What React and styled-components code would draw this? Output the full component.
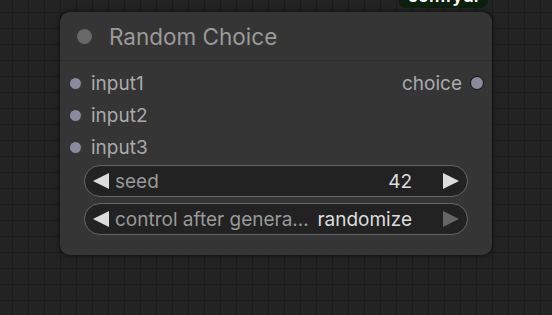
import React from "react";
import styled, { createGlobalStyle } from "styled-components";

const Global = createGlobalStyle`
  html, body {
    margin: 0;
    padding: 0;
    width: 552px;
    height: 315px;
    overflow: hidden;
    background: #222;
  }
  body {
    font-family: Inter, "Noto Sans", sans-serif;
  }
`;

const Canvas = styled.div`
  position: relative;
  width: 552px;
  height: 315px;
  overflow: hidden;
  background-color: #232323;
  background-image:
    linear-gradient(to right, #1b1b1b 1.5px, transparent 1.5px),
    linear-gradient(to bottom, #1b1b1b 1.5px, transparent 1.5px);
  background-size: 16px 16px;
  background-position: 12px 12px;
`;

const Badge = styled.div`
  position: absolute;
  left: 398px;
  top: -18px;
  width: 90px;
  height: 26px;
  border-radius: 8px;
  background: #0d1f0d;
  color: #fff;
  font-size: 18px;
  font-weight: 600;
  display: flex;
  align-items: center;
  justify-content: center;
`;

const Node = styled.div`
  position: absolute;
  left: 60px;
  top: 12px;
  width: 432px;
  height: 243px;
  box-sizing: border-box;
  background: #353535;
  border-radius: 10px;
  box-shadow: 0 0 4px 1px rgba(0, 0, 0, 0.45);
  display: flex;
  flex-direction: column;
`;

const Title = styled.div`
  height: 49px;
  box-sizing: border-box;
  border-bottom: 1px solid #2b2b2b;
  display: flex;
  align-items: center;
  padding-left: 17px;
  gap: 17px;
  color: #9a9a9a;
  font-size: 22.5px;
`;

const TitleDot = styled.span`
  width: 15px;
  height: 15px;
  border-radius: 50%;
  background: #686868;
`;

const Body = styled.div`
  padding-top: 6px;
  display: flex;
  flex-direction: column;
`;

const Row = styled.div`
  height: 32px;
  display: flex;
  align-items: center;
  justify-content: space-between;
  padding: 0 8px 0 10px;
  color: #aaa;
  font-size: 19px;
`;

const Slot = styled.div`
  display: flex;
  align-items: center;
  gap: ${(p) => (p.out ? "8px" : "10px")};
`;

const Dot = styled.span`
  width: ${(p) => (p.out ? "12px" : "11px")};
  height: ${(p) => (p.out ? "12px" : "11px")};
  border-radius: 50%;
  background: #8a8a9e;
  border: ${(p) => (p.out ? "1.5px solid #111" : "none")};
`;

const Widgets = styled.div`
  padding: 2px 24px 0;
  display: flex;
  flex-direction: column;
  gap: 6px;
`;

const Widget = styled.div`
  height: 32px;
  box-sizing: border-box;
  border: 1.5px solid #666;
  border-radius: 16px;
  background: #222;
  display: flex;
  align-items: center;
  padding: 0 8px 0 8px;
  font-size: 19px;
`;

const Arrow = styled.span`
  width: 0;
  height: 0;
  border-top: 8.5px solid transparent;
  border-bottom: 8.5px solid transparent;
  ${(p) =>
    p.right
      ? `border-left: 16px solid ${p.dim ? "#666" : "#ddd"};`
      : `border-right: 16px solid #ddd;`}
`;

const Label = styled.span`
  flex: 1;
  color: #999;
  margin-left: 6px;
  white-space: nowrap;
`;

const Value = styled.span`
  color: #ddd;
  margin-right: 31px;
`;

const ComboWidget = ({ label, value, dim }) => (
  <Widget>
    <Arrow />
    <Label>{label}</Label>
    <Value>{value}</Value>
    <Arrow right dim={dim} />
  </Widget>
);

export default function App() {
  return (
    <>
      <Global />
      <Canvas>
        <Badge>comfyui</Badge>
        <Node>
          <Title>
            <TitleDot />
            Random Choice
          </Title>
          <Body>
            <Row>
              <Slot>
                <Dot />
                input1
              </Slot>
              <Slot out>
                choice
                <Dot out />
              </Slot>
            </Row>
            <Row>
              <Slot>
                <Dot />
                input2
              </Slot>
            </Row>
            <Row>
              <Slot>
                <Dot />
                input3
              </Slot>
            </Row>
          </Body>
          <Widgets>
            <ComboWidget label="seed" value="42" />
            <ComboWidget label="control after genera…" value="randomize" dim />
          </Widgets>
        </Node>
      </Canvas>
    </>
  );
}
